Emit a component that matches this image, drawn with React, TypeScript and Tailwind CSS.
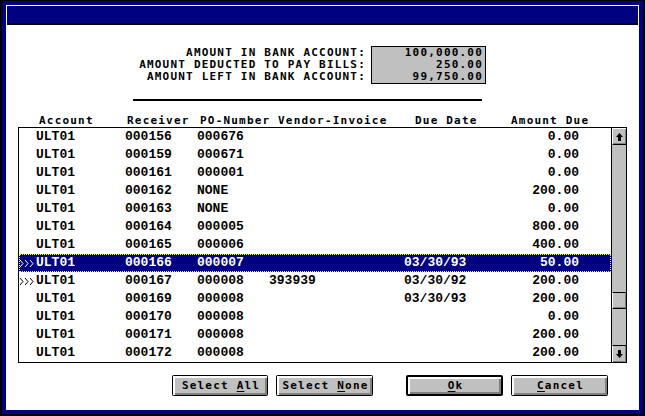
const rows = [
  { acc: 'ULT01', rec: '000156', po: '000676', inv: '', due: '', amt: '0.00' },
  { acc: 'ULT01', rec: '000159', po: '000671', inv: '', due: '', amt: '0.00' },
  { acc: 'ULT01', rec: '000161', po: '000001', inv: '', due: '', amt: '0.00' },
  { acc: 'ULT01', rec: '000162', po: 'NONE', inv: '', due: '', amt: '200.00' },
  { acc: 'ULT01', rec: '000163', po: 'NONE', inv: '', due: '', amt: '0.00' },
  { acc: 'ULT01', rec: '000164', po: '000005', inv: '', due: '', amt: '800.00' },
  { acc: 'ULT01', rec: '000165', po: '000006', inv: '', due: '', amt: '400.00' },
  { acc: 'ULT01', rec: '000166', po: '000007', inv: '', due: '03/30/93', amt: '50.00', sel: true, mark: true },
  { acc: 'ULT01', rec: '000167', po: '000008', inv: '393939', due: '03/30/92', amt: '200.00', mark: true },
  { acc: 'ULT01', rec: '000169', po: '000008', inv: '', due: '03/30/93', amt: '200.00' },
  { acc: 'ULT01', rec: '000170', po: '000008', inv: '', due: '', amt: '0.00' },
  { acc: 'ULT01', rec: '000171', po: '000008', inv: '', due: '', amt: '200.00' },
  { acc: 'ULT01', rec: '000172', po: '000008', inv: '', due: '', amt: '200.00' },
];

const small = "font-['DejaVu_Sans_Mono',monospace] font-bold text-[11px] tracking-[1.2px]";

function Marker() {
  return (
    <svg width="17" height="9" viewBox="0 0 17 9" className="shrink-0">
      {[0, 5, 10].map((x) => (
        <polyline key={x} points={`${x + 1},1 ${x + 4},4.5 ${x + 1},8`} fill="none" stroke="currentColor" strokeWidth="1" />
      ))}
    </svg>
  );
}

function Arrow({ down }: { down?: boolean }) {
  return (
    <svg width="7" height="8" viewBox="0 0 7 8" className={down ? 'rotate-180' : ''}>
      <path d="M3.5 0 L7 4 L5 4 L5 8 L2 8 L2 4 L0 4 Z" fill="black" />
    </svg>
  );
}

function ScrollBox({ children, className = '' }: { children?: React.ReactNode; className?: string }) {
  return (
    <div className={`bg-[#c0c0c0] border-t border-l border-white shadow-[inset_-1px_-1px_0_#808080] flex items-center justify-center ${className}`}>
      {children}
    </div>
  );
}

function Button({ label, u, rest, def, className = '' }: { label: string; u: string; rest: string; def?: boolean; className?: string }) {
  return (
    <div className={`h-[21px] bg-black rounded-[2px] ${def ? 'p-[2px]' : 'p-[1px]'} ${className}`}>
      <div className={`h-full bg-[#c0c0c0] border-t-2 border-l-2 border-white shadow-[inset_-2px_-2px_0_#808080] flex items-center justify-center ${small}`}>
        <span>
          {label}
          <span className="underline underline-offset-2">{u}</span>
          {rest}
        </span>
      </div>
    </div>
  );
}

export default function App() {
  return (
    <div className="w-[645px] h-[416px] bg-black pl-[2px] pr-[2px] pt-[1px] pb-[2px]">
      <div className="h-full bg-[#000080] p-[4px]">
        <div className="h-full bg-white p-[1px] flex flex-col">
          {/* title bar */}
          <div className="h-[19px] shrink-0 bg-[#000080] border-b-2 border-black" />

          {/* summary */}
          <div className={`flex mt-[21px] ml-[123px] ${small}`}>
            <div className="w-[236px] pt-[1px] text-right leading-[12px]">
              <div>AMOUNT IN BANK ACCOUNT:</div>
              <div>AMOUNT DEDUCTED TO PAY BILLS:</div>
              <div>AMOUNT LEFT IN BANK ACCOUNT:</div>
            </div>
            <div className="ml-[5px] w-[115px] border border-black bg-[#c0c0c0] text-right pr-[2px] leading-[12px]">
              <div>100,000.00</div>
              <div>250.00</div>
              <div>99,750.00</div>
            </div>
          </div>

          <div className="ml-[126px] mt-[15px] w-[349px] h-[2px] bg-black" />

          {/* column headers */}
          <div className={`flex ml-[11px] mt-[13px] h-[13px] leading-[13px] ${small}`}>
            <div className="w-[21px]" />
            <div className="w-[88px]">Account</div>
            <div className="w-[73px]">Receiver</div>
            <div className="w-[78px]">PO-Number</div>
            <div className="w-[137px]">Vendor-Invoice</div>
            <div className="w-[96px]">Due Date</div>
            <div>Amount Due</div>
          </div>

          {/* list */}
          <div className="ml-[11px] w-[609px] h-[236px] border border-black flex">
            <div className="w-[592px] flex flex-col font-['Liberation_Mono',monospace] font-bold text-[13px]">
              {rows.map((r, i) => (
                <div
                  key={i}
                  className={`h-[18px] shrink-0 flex items-center ${r.sel ? 'bg-[#000080] text-white outline-1 outline-dotted outline-[#ffff00] -outline-offset-1' : 'text-black'}`}
                >
                  <div className="w-[17px] flex items-center">{r.mark && <Marker />}</div>
                  <div className="w-[89px]">{r.acc}</div>
                  <div className="w-[72px]">{r.rec}</div>
                  <div className="w-[72px]">{r.po}</div>
                  <div className="w-[135px]">{r.inv}</div>
                  <div className="w-[100px]">{r.due}</div>
                  <div className="w-[75px] text-right">{r.amt}</div>
                </div>
              ))}
            </div>
            <div className="flex-1 border-l border-black bg-[#c0c0c0] flex flex-col">
              <ScrollBox className="h-[17px] border-b border-b-black">
                <Arrow />
              </ScrollBox>
              <div className="h-[147px]" />
              <ScrollBox className="h-[17px] border-y border-y-black" />
              <div className="flex-1" />
              <ScrollBox className="h-[17px] border-t-black">
                <Arrow down />
              </ScrollBox>
            </div>
          </div>

          {/* buttons */}
          <div className="flex mt-[12px]">
            <Button className="ml-[165px] w-[96px]" label="Select " u="A" rest="ll" />
            <Button className="ml-[8px] w-[97px]" label="Select " u="N" rest="one" />
            <Button className="ml-[33px] w-[97px]" label="" u="O" rest="k" def />
            <Button className="ml-[8px] w-[97px]" label="" u="C" rest="ancel" />
          </div>
        </div>
      </div>
    </div>
  );
}
